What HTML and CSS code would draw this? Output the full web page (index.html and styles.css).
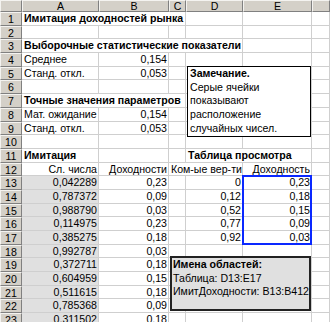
FILE: index.html
```html
<!DOCTYPE html>
<html>
<head>
<meta charset="utf-8">
<link rel="stylesheet" href="styles.css">
</head>
<body>
<div class="sheet">
  <div class="grid">
    <div class="corner"></div>
    <div class="ch">A</div><div class="ch">B</div><div class="ch">C</div><div class="ch">D</div><div class="ch">E</div><div class="ch"></div>

    <div class="rh">1</div><div class="c span3 b">Имитация доходностей рынка</div><div class="c"></div><div class="c"></div><div class="c"></div>
    <div class="rh">2</div><div class="c"></div><div class="c"></div><div class="c"></div><div class="c"></div><div class="c"></div><div class="c"></div>
    <div class="rh">3</div><div class="c span4 b">Выборочные статистические показатели</div><div class="c"></div><div class="c"></div>
    <div class="rh">4</div><div class="c">Среднее</div><div class="c r">0,154</div><div class="c"></div><div class="c"></div><div class="c"></div><div class="c"></div>
    <div class="rh">5</div><div class="c">Станд. откл.</div><div class="c r">0,053</div><div class="c"></div><div class="c"></div><div class="c"></div><div class="c"></div>
    <div class="rh">6</div><div class="c"></div><div class="c"></div><div class="c"></div><div class="c"></div><div class="c"></div><div class="c"></div>
    <div class="rh">7</div><div class="c span3 b">Точные значения параметров</div><div class="c"></div><div class="c"></div><div class="c"></div>
    <div class="rh">8</div><div class="c">Мат. ожидание</div><div class="c r">0,154</div><div class="c"></div><div class="c"></div><div class="c"></div><div class="c"></div>
    <div class="rh">9</div><div class="c">Станд. откл.</div><div class="c r">0,053</div><div class="c"></div><div class="c"></div><div class="c"></div><div class="c"></div>
    <div class="rh">10</div><div class="c"></div><div class="c"></div><div class="c"></div><div class="c"></div><div class="c"></div><div class="c"></div>
    <div class="rh">11</div><div class="c b">Имитация</div><div class="c"></div><div class="c"></div><div class="c span2 b">Таблица просмотра</div><div class="c"></div>
    <div class="rh">12</div><div class="c r">Сл. числа</div><div class="c r">Доходности</div><div class="c span2 r">Ком-ые вер-ти</div><div class="c r">Доходность</div><div class="c"></div>
    <div class="rh">13</div><div class="c r g">0,042289</div><div class="c r">0,23</div><div class="c"></div><div class="c r">0</div><div class="c r">0,23</div><div class="c"></div>
    <div class="rh">14</div><div class="c r g">0,787372</div><div class="c r">0,09</div><div class="c"></div><div class="c r">0,12</div><div class="c r">0,18</div><div class="c"></div>
    <div class="rh">15</div><div class="c r g">0,988790</div><div class="c r">0,03</div><div class="c"></div><div class="c r">0,52</div><div class="c r">0,15</div><div class="c"></div>
    <div class="rh">16</div><div class="c r g">0,114975</div><div class="c r">0,23</div><div class="c"></div><div class="c r">0,77</div><div class="c r">0,09</div><div class="c"></div>
    <div class="rh">17</div><div class="c r g">0,385275</div><div class="c r">0,18</div><div class="c"></div><div class="c r">0,92</div><div class="c r">0,03</div><div class="c"></div>
    <div class="rh">18</div><div class="c r g">0,992787</div><div class="c r">0,03</div><div class="c"></div><div class="c"></div><div class="c"></div><div class="c"></div>
    <div class="rh">19</div><div class="c r g">0,372711</div><div class="c r">0,18</div><div class="c"></div><div class="c"></div><div class="c"></div><div class="c"></div>
    <div class="rh">20</div><div class="c r g">0,604959</div><div class="c r">0,15</div><div class="c"></div><div class="c"></div><div class="c"></div><div class="c"></div>
    <div class="rh">21</div><div class="c r g">0,511615</div><div class="c r">0,18</div><div class="c"></div><div class="c"></div><div class="c"></div><div class="c"></div>
    <div class="rh">22</div><div class="c r g">0,785368</div><div class="c r">0,09</div><div class="c"></div><div class="c"></div><div class="c"></div><div class="c"></div>
    <div class="rh">23</div><div class="c r g">0,311502</div><div class="c r">0,18</div><div class="c"></div><div class="c"></div><div class="c"></div><div class="c"></div>
  </div>

  <div class="note note1">
    <div class="b">Замечание.</div>
    <div>Серые ячейки</div>
    <div>показывают</div>
    <div>расположение</div>
    <div>случайных чисел.</div>
  </div>

  <div class="sel"></div>

  <div class="note note2">
    <div class="b">Имена областей:</div>
    <div>Таблица: D13:E17</div>
    <div>ИмитДоходности: B13:B412</div>
  </div>
</div>
</body>
</html>
```

FILE: styles.css
```css
html, body {
  margin: 0;
  padding: 0;
  background: #ffffff;
}

.sheet {
  position: relative;
  width: 330px;
  height: 322px;
  overflow: hidden;
  font-family: "Liberation Sans", Arial, sans-serif;
  font-size: 10.6px;
  color: #000;
}

.grid {
  display: grid;
  grid-template-columns: 22px 77px 70px 17px 57px 69px 18px;
  grid-template-rows: 12px repeat(23, 13.7px);
}

.grid > div {
  box-sizing: border-box;
  white-space: nowrap;
  overflow: hidden;
}

.corner,
.ch,
.rh {
  background: #d4d0c8;
  border-top: 1px solid #f4f3f0;
  border-left: 1px solid #f4f3f0;
  border-right: 1px solid #808080;
  border-bottom: 1px solid #808080;
  color: #000;
  text-align: center;
}

.ch {
  line-height: 10px;
}

.rh {
  line-height: 12px;
}

.c {
  border-right: 1px solid #cfcfcf;
  border-bottom: 1px solid #cfcfcf;
  padding: 0 1px 0 2px;
  line-height: 13px;
}

.r { text-align: right; }
.b { font-weight: bold; letter-spacing: 0; }
.g { background: #e0e0e0; }

.span2 { grid-column: span 2; }
.span3 { grid-column: span 3; }
.span4 { grid-column: span 4; }

.note {
  position: absolute;
  box-sizing: border-box;
  line-height: 13.7px;
  white-space: nowrap;
}

.note1 {
  left: 187px;
  top: 66px;
  width: 124px;
  height: 71px;
  background: #ffffff;
  border: 1px solid #000;
  padding: 0 2px;
}

.note2 {
  left: 170px;
  top: 256px;
  width: 141px;
  height: 55px;
  background: #e0e0e0;
  border: 2px solid #222;
  padding: 0 1px;
}

.sel {
  position: absolute;
  left: 242px;
  top: 175px;
  width: 70px;
  height: 70px;
  box-sizing: border-box;
  border: 2px solid #0a28ff;
}
```
